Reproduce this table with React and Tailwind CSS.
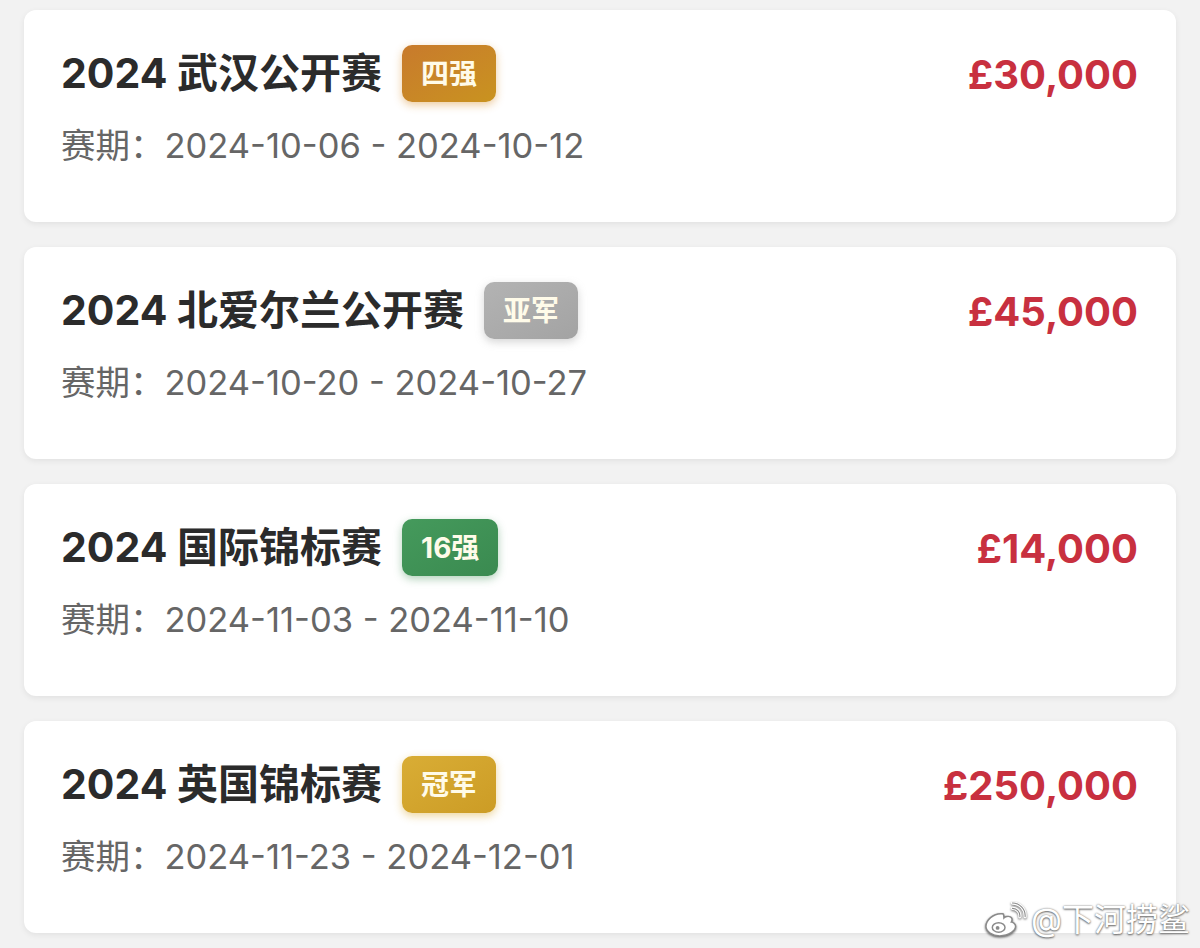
import React from "react";

const matches = [
  {
    name: "2024 武汉公开赛",
    badge: "四强",
    badgeClass: "bg-gradient-to-br from-[#c87a2c] to-[#c9931f] shadow-[0_3px_8px_rgba(214,140,40,0.45)]",
    prize: "£30,000",
    dates: "2024-10-06 - 2024-10-12",
  },
  {
    name: "2024 北爱尔兰公开赛",
    badge: "亚军",
    badgeClass: "bg-gradient-to-br from-[#b3b3b3] to-[#a3a3a3] shadow-[0_3px_8px_rgba(150,150,150,0.4)]",
    prize: "£45,000",
    dates: "2024-10-20 - 2024-10-27",
  },
  {
    name: "2024 国际锦标赛",
    badge: "16强",
    badgeClass: "bg-gradient-to-br from-[#459a5c] to-[#3a8a50] shadow-[0_3px_8px_rgba(60,140,80,0.4)]",
    prize: "£14,000",
    dates: "2024-11-03 - 2024-11-10",
  },
  {
    name: "2024 英国锦标赛",
    badge: "冠军",
    badgeClass: "bg-gradient-to-br from-[#d9ad35] to-[#cc9c25] shadow-[0_3px_8px_rgba(214,165,40,0.45)]",
    prize: "£250,000",
    dates: "2024-11-23 - 2024-12-01",
  },
];

function WeiboLogo() {
  return (
    <svg width="44" height="36" viewBox="0 0 40 34" className="drop-shadow-[0_1px_1px_rgba(0,0,0,0.6)]">
      <path
        d="M16 11c-7 0-14 6-14 12 0 5 6 9 13 9 9 0 15-5 15-9 0-3-3-4-4-4 1-2 1-4-1-5-2-1-5 0-6 1 0-1 0-3-1-4-1 0-2 0-2 0z"
        fill="#fff"
        stroke="#8a8a8a"
        strokeWidth="1.4"
      />
      <ellipse cx="14" cy="24" rx="6" ry="4.5" fill="#fff" stroke="#8a8a8a" strokeWidth="1.4" />
      <circle cx="13" cy="24.5" r="1.8" fill="#8a8a8a" />
      <path d="M27 6a7 7 0 0 1 7 8" fill="none" stroke="#fff" strokeWidth="3" strokeLinecap="round" />
      <path d="M27 6a7 7 0 0 1 7 8" fill="none" stroke="#8a8a8a" strokeWidth="1" strokeLinecap="round" />
      <path d="M27 1a12 12 0 0 1 12 13" fill="none" stroke="#fff" strokeWidth="3" strokeLinecap="round" />
      <path d="M27 1a12 12 0 0 1 12 13" fill="none" stroke="#8a8a8a" strokeWidth="1" strokeLinecap="round" />
    </svg>
  );
}

export default function App() {
  return (
    <div
      className="relative min-h-[948px] bg-[#f2f2f2] px-[24px] pt-[10px] flex flex-col gap-[25px]"
      style={{ fontFamily: 'Inter, "Noto Sans CJK SC", sans-serif' }}
    >
      {matches.map((m) => (
        <div
          key={m.name}
          className="h-[212px] bg-white rounded-[12px] shadow-[0_2px_6px_rgba(0,0,0,0.07)] pl-[37px] pr-[38px] pt-[35px]"
        >
          <div className="flex items-start justify-between">
            <div className="flex items-center h-[57px]">
              <span className="text-[41px] font-bold text-[#2b2b2b] leading-none">{m.name}</span>
              <span
                className={`ml-[20px] h-[57px] px-[19px] rounded-[10px] flex items-center justify-center text-[28px] font-bold text-[#fffbe9] ${m.badgeClass}`}
              >
                {m.badge}
              </span>
            </div>
            <div className="h-[57px] flex items-center pt-[3px] text-[40px] font-bold text-[#c8303f] leading-none">
              {m.prize}
            </div>
          </div>
          <div className="mt-[18px] text-[34.5px] text-[#666666] leading-[52px]">
            赛期：{m.dates}
          </div>
        </div>
      ))}

      <div className="absolute right-[10px] bottom-[10px] flex items-center gap-[4px]">
        <WeiboLogo />
        <span className="text-[32px] text-white leading-none [text-shadow:0_0_2px_#777,0_1px_2px_#666]">
          @下河捞鲨
        </span>
      </div>
    </div>
  );
}
